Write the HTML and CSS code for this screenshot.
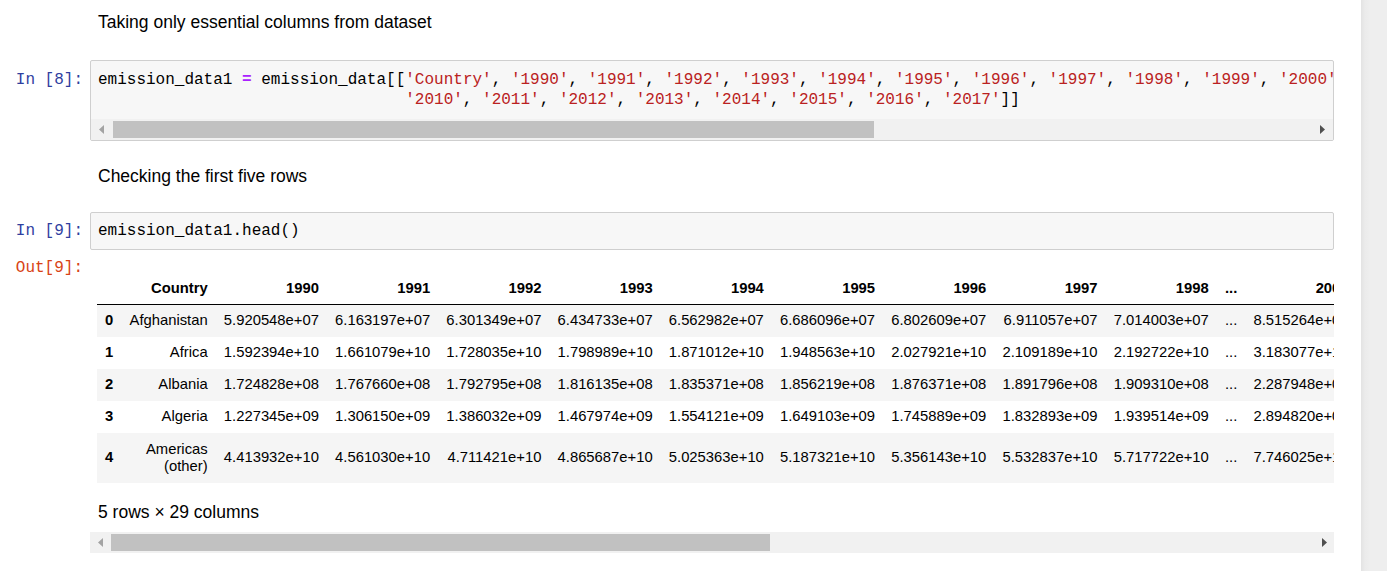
FILE: index.html
```html
<!DOCTYPE html>
<html>
<head>
<meta charset="utf-8">
<link rel="stylesheet" href="styles.css">
</head>
<body>
<div class="page">
  <div class="notebook">
    <div class="cell md-cell first">
      <div class="prompt"></div>
      <div class="md">Taking only essential columns from dataset</div>
    </div>

    <div class="cell code-cell c1">
      <div class="prompt in">In&nbsp;[8]:</div>
      <div class="input">
        <pre class="code">emission_data1 <span class="op">=</span> emission_data[[<span class="s">'Country'</span>, <span class="s">'1990'</span>, <span class="s">'1991'</span>, <span class="s">'1992'</span>, <span class="s">'1993'</span>, <span class="s">'1994'</span>, <span class="s">'1995'</span>, <span class="s">'1996'</span>, <span class="s">'1997'</span>, <span class="s">'1998'</span>, <span class="s">'1999'</span>, <span class="s">'2000'</span>, <span class="s">'2001'</span>, <span class="s">'2002'</span>, <span class="s">'2003'</span>, <span class="s">'2004'</span>, <span class="s">'2005'</span>, <span class="s">'2006'</span>, <span class="s">'2007'</span>, <span class="s">'2008'</span>, <span class="s">'2009'</span>,
                                <span class="s">'2010'</span>, <span class="s">'2011'</span>, <span class="s">'2012'</span>, <span class="s">'2013'</span>, <span class="s">'2014'</span>, <span class="s">'2015'</span>, <span class="s">'2016'</span>, <span class="s">'2017'</span>]]</pre>
        <div class="hscroll in-box">
          <div class="sbtn"><svg width="5" height="9" viewBox="0 0 5 9"><polygon points="5,0 5,9 0,4.5" fill="#a3a3a3"/></svg></div>
          <div class="track"><div class="thumb thumb-code"></div></div>
          <div class="sbtn"><svg width="5" height="9" viewBox="0 0 5 9"><polygon points="0,0 0,9 5,4.5" fill="#505050"/></svg></div>
        </div>
      </div>
    </div>

    <div class="cell md-cell second">
      <div class="prompt"></div>
      <div class="md">Checking the first five rows</div>
    </div>

    <div class="cell code-cell c2">
      <div class="prompt in">In&nbsp;[9]:</div>
      <div class="input">
        <pre class="code">emission_data1.head()</pre>
      </div>
    </div>

    <div class="cell out-cell">
      <div class="prompt out">Out[9]:</div>
      <div class="output">
        <div class="frame">
          <table class="df">
            <thead>
              <tr><th></th><th>Country</th><th>1990</th><th>1991</th><th>1992</th><th>1993</th><th>1994</th><th>1995</th><th>1996</th><th>1997</th><th>1998</th><th>...</th><th>2008</th></tr>
            </thead>
            <tbody>
              <tr><th>0</th><td>Afghanistan</td><td>5.920548e+07</td><td>6.163197e+07</td><td>6.301349e+07</td><td>6.434733e+07</td><td>6.562982e+07</td><td>6.686096e+07</td><td>6.802609e+07</td><td>6.911057e+07</td><td>7.014003e+07</td><td>...</td><td>8.515264e+07</td></tr>
              <tr><th>1</th><td>Africa</td><td>1.592394e+10</td><td>1.661079e+10</td><td>1.728035e+10</td><td>1.798989e+10</td><td>1.871012e+10</td><td>1.948563e+10</td><td>2.027921e+10</td><td>2.109189e+10</td><td>2.192722e+10</td><td>...</td><td>3.183077e+10</td></tr>
              <tr><th>2</th><td>Albania</td><td>1.724828e+08</td><td>1.767660e+08</td><td>1.792795e+08</td><td>1.816135e+08</td><td>1.835371e+08</td><td>1.856219e+08</td><td>1.876371e+08</td><td>1.891796e+08</td><td>1.909310e+08</td><td>...</td><td>2.287948e+08</td></tr>
              <tr><th>3</th><td>Algeria</td><td>1.227345e+09</td><td>1.306150e+09</td><td>1.386032e+09</td><td>1.467974e+09</td><td>1.554121e+09</td><td>1.649103e+09</td><td>1.745889e+09</td><td>1.832893e+09</td><td>1.939514e+09</td><td>...</td><td>2.894820e+09</td></tr>
              <tr><th>4</th><td>Americas (other)</td><td>4.413932e+10</td><td>4.561030e+10</td><td>4.711421e+10</td><td>4.865687e+10</td><td>5.025363e+10</td><td>5.187321e+10</td><td>5.356143e+10</td><td>5.532837e+10</td><td>5.717722e+10</td><td>...</td><td>7.746025e+10</td></tr>
            </tbody>
          </table>
          <p class="shape">5 rows × 29 columns</p>
        </div>
        <div class="hscroll out-bar">
          <div class="sbtn"><svg width="5" height="9" viewBox="0 0 5 9"><polygon points="5,0 5,9 0,4.5" fill="#a3a3a3"/></svg></div>
          <div class="track"><div class="thumb thumb-out"></div></div>
          <div class="sbtn"><svg width="5" height="9" viewBox="0 0 5 9"><polygon points="0,0 0,9 5,4.5" fill="#505050"/></svg></div>
        </div>
      </div>
    </div>
  </div>
  <div class="gutter"></div>
</div>
</body>
</html>
```

FILE: styles.css
```css
html, body {
  margin: 0;
  padding: 0;
  background: #eeeeee;
  overflow: hidden;
}

.page {
  display: flex;
  width: 1387px;
  height: 571px;
}

.notebook {
  width: 1361px;
  flex: none;
  background: #ffffff;
  padding-right: 27px;
  box-sizing: border-box;
  font-family: "Liberation Sans", Arial, sans-serif;
  color: #000;
}

.gutter {
  flex: 1;
  background: linear-gradient(to right, #e3e3e3 0px, #ebebeb 4px, #eeeeee 9px);
}

.cell {
  display: flex;
  align-items: flex-start;
}

.prompt {
  width: 90px;
  flex: none;
  box-sizing: border-box;
  padding-right: 7px;
  text-align: right;
  font-family: "Liberation Mono", "DejaVu Sans Mono", monospace;
  font-size: 16px;
  line-height: 20px;
  white-space: nowrap;
}

.prompt.in {
  color: #303F9F;
  padding-top: 9.5px;
}

.prompt.out {
  color: #D84315;
}

.md {
  padding-left: 8px;
  font-size: 17.5px;
  line-height: 20px;
}

.md-cell.first {
  margin-top: 12px;
}

.code-cell.c1 {
  margin-top: 28px;
}

.md-cell.second {
  margin-top: 25px;
}

.code-cell.c2 {
  margin-top: 26px;
}

.input {
  flex: 1;
  min-width: 0;
  background: #f7f7f7;
  border: 1px solid #cfcfcf;
  border-radius: 2px;
  overflow: hidden;
}

.code {
  margin: 0;
  padding: 8.5px 0 7.5px 7px;
  font-family: "Liberation Mono", "DejaVu Sans Mono", monospace;
  font-size: 16px;
  line-height: 20.5px;
  color: #000;
  white-space: pre;
  overflow: hidden;
}

.c2 .code {
  line-height: 20px;
}

.code .op {
  color: #AA22FF;
  font-weight: bold;
}

.code .s {
  color: #BA2121;
}

.c1 .code {
  padding-bottom: 8px;
}

/* fake horizontal scrollbars */
.hscroll {
  display: flex;
  align-items: center;
  height: 21px;
  background: #f1f1f1;
}

.sbtn {
  width: 21px;
  height: 21px;
  flex: none;
  display: flex;
  align-items: center;
  justify-content: center;
}

.track {
  flex: 1;
  height: 21px;
  display: flex;
  align-items: center;
}

.thumb {
  height: 17px;
  background: #c1c1c1;
}

.thumb-code {
  margin-left: 1px;
  width: 761px;
}

.thumb-out {
  width: 659px;
}

/* output */
.out-cell {
  margin-top: 8px;
}

.output {
  flex: 1;
  min-width: 0;
}

.frame {
  padding-top: 15px;
  padding-left: 7px;
  overflow: hidden;
}

.df {
  width: min-content;
  border-collapse: collapse;
  border-spacing: 0;
  font-size: 14.8px;
  color: #000;
}

.df th,
.df td {
  padding: 7.5px 8.1px;
  line-height: 17px;
  text-align: right;
  vertical-align: middle;
  white-space: normal;
  border: none;
}

.df thead th {
  font-weight: bold;
  border-bottom: 1px solid #000;
  padding-bottom: 6.5px;
}

.df tbody th {
  font-weight: bold;
}

.df tbody tr:nth-child(odd) {
  background: #f5f5f5;
}

.df tbody tr:last-child td,
.df tbody tr:last-child th {
  padding-top: 8px;
  padding-bottom: 8px;
}

.shape {
  margin: 19px 0 0 1px;
  font-size: 17.5px;
  line-height: 20px;
}

.out-bar {
  margin-top: 10px;
}

.out-bar .sbtn {
  width: 20px;
}

.out-bar .thumb {
  margin-left: 1px;
}
```
